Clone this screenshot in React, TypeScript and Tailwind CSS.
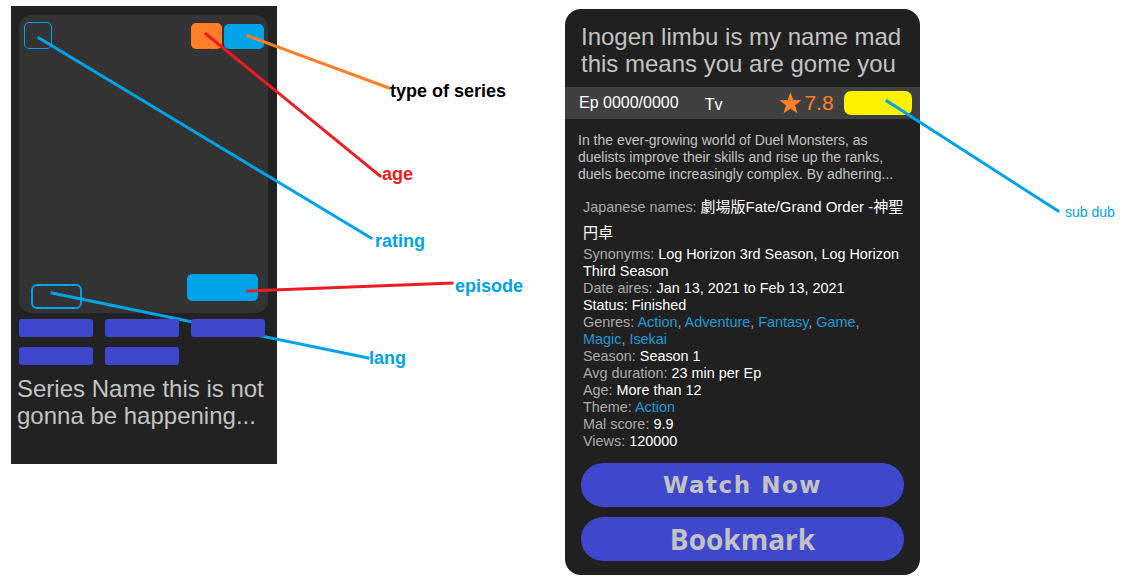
import React from 'react';

const pills = [0, 1, 2, 3, 4];

function SeriesCard() {
  return (
    <div className="ml-[11px] mt-[6px] w-[266px] h-[458px] bg-[#222222] pt-[9px] pl-[8px] shrink-0">
      <div className="relative w-[249px] h-[298px] rounded-[13px] bg-[#333333]">
        {/* rating */}
        <div className="absolute left-[5px] top-[7px] w-[28px] h-[27px] rounded-[5px] border border-[#00a2e8]" />
        {/* age + type */}
        <div className="absolute right-[4px] top-[8px] flex items-start gap-[2px]">
          <div className="w-[31px] h-[26px] rounded-[5px] bg-[#ff7f27]" />
          <div className="mt-[1px] w-[40px] h-[25px] rounded-[5px] bg-[#00a2e8]" />
        </div>
        {/* lang */}
        <div className="absolute left-[12px] bottom-[4px] w-[51px] h-[25px] rounded-[6px] border-2 border-[#00a2e8]" />
        {/* episode */}
        <div className="absolute right-[10px] bottom-[12px] w-[71px] h-[27px] rounded-[5px] bg-[#00a2e8]" />
      </div>

      <div className="mt-[6px] flex flex-wrap w-[252px] gap-x-[12px] gap-y-[10px]">
        {pills.map((p) => (
          <div key={p} className="relative z-20 w-[74px] h-[18px] rounded-[3px] bg-[#3f48cc]" />
        ))}
      </div>

      <p className="mt-[10px] -ml-[2px] text-[24px] leading-[27px] text-[#c3c3c3]">
        Series Name this is not gonna be happening...
      </p>
    </div>
  );
}

function Star() {
  return (
    <svg width="23" height="22" viewBox="0 0 24 23" className="shrink-0">
      <polygon
        points="12,0.5 15,8.3 23.5,8.6 16.8,13.9 19.2,22.3 12,17.4 4.8,22.3 7.2,13.9 0.5,8.6 9,8.3"
        fill="#ff7f27"
      />
    </svg>
  );
}

function Row({ label, children }: { label: string; children?: React.ReactNode }) {
  return (
    <div>
      <span className="text-[#ababab]">{label}</span> <span className="text-white">{children}</span>
    </div>
  );
}

function Link({ children }: { children: React.ReactNode }) {
  return <span className="text-[#1e9ad8]">{children}</span>;
}

function DetailCard() {
  return (
    <div className="ml-[288px] mt-[9px] w-[355px] h-[566px] rounded-[16px] bg-[#202020] flex flex-col shrink-0">
      <h1 className="px-[16px] pt-[14px] text-[24px] leading-[27px] text-[#c3c3c3]">
        Inogen limbu is my name mad
        <br />
        this means you are gome you
      </h1>

      <div className="mt-[10px] h-[32px] bg-[#404040] flex items-center pl-[14px]">
        <span className="text-[16px] text-white">Ep 0000/0000</span>
        <span className="ml-[26px] mt-[4px] text-[16px] text-white">Tv</span>
        <span className="ml-[57px] flex items-center gap-[2px]">
          <Star />
          <span className="text-[21px] text-[#ff7f27]">7.8</span>
        </span>
        <span className="ml-[10px] w-[68px] h-[24px] rounded-[7px] bg-[#fff200]" />
      </div>

      <p className="mt-[13px] px-[13px] text-[14px] leading-[17px] text-[#c3c3c3] whitespace-nowrap">
        In the ever-growing world of Duel Monsters, as
        <br />
        duelists improve their skills and rise up the ranks,
        <br />
        duels become increasingly complex. By adhering...
      </p>

      <div className="mt-[11px] pl-[18px] text-[14.4px] leading-[17px] whitespace-nowrap">
        <div className="leading-[25px]">
          <span className="text-[#ababab]">Japanese names:</span>{' '}
          <span className="text-white font-['Liberation_Sans','Noto_Sans_CJK_JP',sans-serif] text-[15px]">
            劇場版Fate/Grand Order -神聖
            <br />
            円卓
          </span>
        </div>
        <div>
          <span className="text-[#ababab]">Synonyms:</span>{' '}
          <span className="text-white">
            Log Horizon 3rd Season, Log Horizon
            <br />
            Third Season
          </span>
        </div>
        <Row label="Date aires:">Jan 13, 2021 to Feb 13, 2021</Row>
        <div className="text-white">Status: Finished</div>
        <div>
          <span className="text-[#ababab]">Genres: </span>
          <Link>Action</Link>
          <span className="text-[#ababab]">, </span>
          <Link>Adventure</Link>
          <span className="text-[#ababab]">, </span>
          <Link>Fantasy</Link>
          <span className="text-[#ababab]">, </span>
          <Link>Game</Link>
          <span className="text-[#ababab]">,</span>
          <br />
          <Link>Magic</Link>
          <span className="text-[#ababab]">, </span>
          <Link>Isekai</Link>
        </div>
        <Row label="Season:">Season 1</Row>
        <Row label="Avg duration:">23 min per Ep</Row>
        <Row label="Age:">More than 12</Row>
        <div>
          <span className="text-[#ababab]">Theme:</span> <Link>Action</Link>
        </div>
        <Row label="Mal score:">9.9</Row>
        <Row label="Views:">120000</Row>
      </div>

      <div className="mt-auto px-[16px] pb-[14px] flex flex-col gap-[10px]">
        <button className="h-[44px] w-full rounded-full bg-[#3f48cc] text-[#c3c3c3] font-['DejaVu_Sans',sans-serif] font-bold text-[23px] tracking-[1.5px]">
          Watch Now
        </button>
        <button className="h-[44px] w-full rounded-full bg-[#3f48cc] text-[#c3c3c3] font-['Open_Sans',sans-serif] font-bold text-[28px] leading-none">
          Bookmark
        </button>
      </div>
    </div>
  );
}

function Annotations() {
  return (
    <>
      <svg
        className="absolute inset-0 z-10 pointer-events-none"
        width="1128"
        height="585"
        viewBox="0 0 1128 585"
      >
        <g strokeWidth="3" strokeLinecap="square">
          <line x1="248" y1="36" x2="389" y2="88" stroke="#ff7f27" />
          <line x1="206" y1="34" x2="380" y2="176" stroke="#ed1c24" />
          <line x1="39" y1="38" x2="371" y2="238" stroke="#00a2e8" />
          <line x1="248" y1="291" x2="452" y2="283" stroke="#ed1c24" />
          <line x1="52" y1="293" x2="368" y2="358" stroke="#00a2e8" />
          <line x1="887" y1="101" x2="1058" y2="211" stroke="#00a2e8" />
        </g>
      </svg>
      <span className="absolute z-10 left-[390px] top-[81px] text-[18px] leading-[20px] font-bold text-black">type of series</span>
      <span className="absolute z-10 left-[382px] top-[164px] text-[18px] leading-[20px] font-bold text-[#ed1c24]">age</span>
      <span className="absolute z-10 left-[375px] top-[231px] text-[18px] leading-[20px] font-bold text-[#00a2e8]">rating</span>
      <span className="absolute z-10 left-[455px] top-[276px] text-[18px] leading-[20px] font-bold text-[#00a2e8]">episode</span>
      <span className="absolute z-10 left-[369px] top-[348px] text-[18px] leading-[20px] font-bold text-[#00a2e8]">lang</span>
      <span className="absolute z-10 left-[1065px] top-[204px] text-[14px] leading-[16px] text-[#00a2e8]">sub dub</span>
    </>
  );
}

export default function App() {
  return (
    <div className="relative w-[1128px] h-[585px] bg-white overflow-hidden flex items-start font-['Liberation_Sans',Arial,sans-serif]">
      <SeriesCard />
      <DetailCard />
      <Annotations />
    </div>
  );
}
